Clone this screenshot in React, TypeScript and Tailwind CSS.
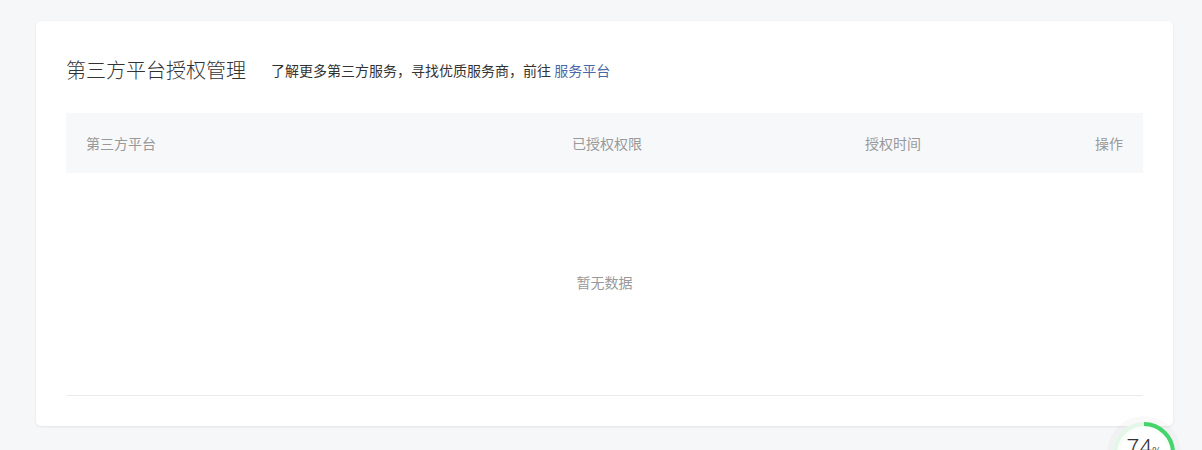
import React from "react";

const font = { fontFamily: '"Noto Sans CJK SC", "Noto Sans", sans-serif' };

function ProgressBall({ percent }: { percent: number }) {
  const r = 29;
  const c = 2 * Math.PI * r;
  return (
    <div className="absolute left-[1113px] top-[422px] w-[62px] h-[62px] rounded-full bg-white shadow-[0_0_0_6px_rgba(0,0,0,0.025)]">
      <div className="absolute inset-[3px] rounded-full bg-[radial-gradient(circle,#ffffff_55%,#dff7e5_100%)]" />
      <svg className="absolute inset-0" width="62" height="62" viewBox="0 0 62 62">
        <circle cx="31" cy="31" r={r} fill="none" stroke="#e3f6e8" strokeWidth="4" />
        <circle
          cx="31"
          cy="31"
          r={r}
          fill="none"
          stroke="#45d46c"
          strokeWidth="4"
          strokeDasharray={`${(c * percent) / 100} ${c}`}
          transform="rotate(-90 31 31)"
        />
      </svg>
      <div className="absolute inset-0 flex items-start justify-center pt-[10px] text-[#333]">
        <span className="text-[24px] leading-[28px] font-light">{percent}</span>
        <span className="text-[10px] leading-[10px] mt-[14px]">%</span>
      </div>
    </div>
  );
}

export default function App() {
  const cols = ["第三方平台", "已授权权限", "授权时间", "操作"];
  return (
    <div className="relative min-h-[450px] overflow-hidden bg-[#f6f7f9] pl-[36px] pr-[29px] pt-[21px]" style={font}>
      <div className="bg-white rounded-[5px] shadow-[0_1px_3px_rgba(0,0,0,0.08)] px-[30px] pt-[35px] pb-[30px]">
        <div className="flex items-center h-[28px]">
          <h1 className="text-[20px] leading-[28px] text-[#333] font-light">第三方平台授权管理</h1>
          <p className="ml-[25px] text-[14px] text-[#333]">
            了解更多第三方服务，寻找优质服务商，前往 <a className="text-[#4a68a8]">服务平台</a>
          </p>
        </div>
        <div className="mt-[29px] border-b border-[#ebebeb]">
          <div className="grid grid-cols-[486px_293px_1fr_auto] h-[60px] items-center bg-[#f7f8fa] text-[14px] text-[#999]">
            <div className="pl-[20px]">{cols[0]}</div>
            <div className="pl-[20px]">{cols[1]}</div>
            <div className="pl-[20px]">{cols[2]}</div>
            <div className="pr-[20px] text-right">{cols[3]}</div>
          </div>
          <div className="h-[222px] flex items-center justify-center pb-[3px] text-[14px] text-[#999]">暂无数据</div>
        </div>
      </div>
      <ProgressBall percent={74} />
    </div>
  );
}
